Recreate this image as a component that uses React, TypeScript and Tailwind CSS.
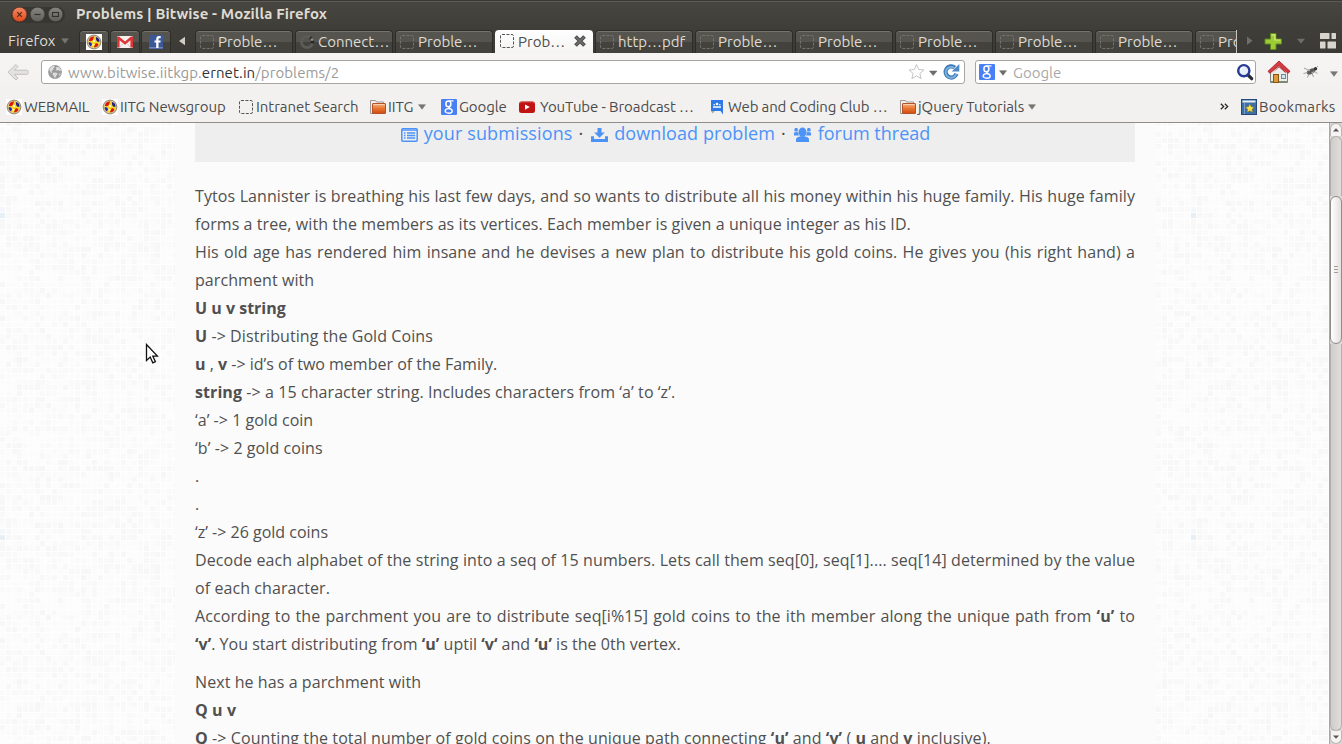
import React from "react";

const UI = "font-['Ubuntu','Open_Sans',sans-serif]";

/* ---------- small icons ---------- */

function Dashed({ dark }: { dark?: boolean }) {
  return (
    <svg className="size-4 shrink-0" viewBox="0 0 16 16">
      <rect x="1.500" y="1.500" width="13" height="13" rx="1.500" fill="none" stroke={dark ? "#555" : "#74736e"} strokeWidth="1" strokeDasharray="3 1.400" />
    </svg>
  );
}

function Emblem() {
  return (
    <svg className="size-4 shrink-0" viewBox="0 0 16 16">
      <rect width="16" height="16" fill="#fff" />
      <circle cx="8" cy="8" r="6.900" fill="#d9c79a" stroke="#8f8670" strokeWidth="1" />
      <circle cx="8" cy="8" r="5.500" fill="#f6d822" />
      <path d="M2.800 6.500a5.400 5.400 0 0 1 6-4c-2 .8-.8 3.300-2.800 4.300-1.300.6-2.700.5-3.200-.3z" fill="#e01414" />
      <path d="M10 3c2.500.5 3.700 2.500 3.500 4.500-1.400.7-2.500.3-3-.9-.4-1.200-.9-2.200-.5-3.600z" fill="#1d1d8c" />
      <path d="M2.600 8.500c1.500-.8 3.300 0 3.400 1.800L5 12.600C3.500 11.700 2.600 10 2.600 8.500z" fill="#2323b4" />
      <path d="M9.500 9.500c1.500-.6 3.200.2 2.700 1.700-.8 1.500-2.800 2.400-4.300 2z" fill="#d81414" />
      <circle cx="8" cy="7" r="1" fill="#fff" />
      <circle cx="7.300" cy="10.800" r=".9" fill="#fff" />
    </svg>
  );
}

function Tri({ cls }: { cls: string }) {
  return (
    <svg className={`shrink-0 ${cls}`} width="8" height="6" viewBox="0 0 8 6">
      <path d="M.6.7h6.800L4 5.300z" fill="currentColor" stroke="currentColor" strokeWidth=".6" />
    </svg>
  );
}

function Folder() {
  return (
    <svg className="size-4 shrink-0" viewBox="0 0 16 16">
      <defs>
        <linearGradient id="fold" x1="0" y1="0" x2="0" y2="1">
          <stop offset="0" stopColor="#f7b384" />
          <stop offset=".5" stopColor="#e8762f" />
          <stop offset="1" stopColor="#cf4a13" />
        </linearGradient>
      </defs>
      <path d="M.5 14.500v-13h5l1 1.500h7v11.500z" fill="#f1efed" stroke="#9d9995" />
      <rect x="2.500" y="4.500" width="13" height="10" rx=".5" fill="url(#fold)" stroke="#b5522a" />
      <path d="M3.500 5.500h11" stroke="#fbd0b0" />
    </svg>
  );
}

function GLogo() {
  return (
    <svg className="size-4 shrink-0" viewBox="0 0 16 16">
      <rect width="16" height="16" rx="1" fill="#4a80f5" />
      <g fill="none" stroke="#fff">
        <ellipse cx="7.400" cy="4.900" rx="2.500" ry="2.800" strokeWidth="1.500" />
        <path d="M7.500 1.900h5" strokeWidth="1.200" />
        <path d="M9 7.300c-2.200.9-1.200 1.600.6 2.500" strokeWidth="1.500" />
        <ellipse cx="7.700" cy="11.900" rx="3.500" ry="2.300" strokeWidth="1.400" />
      </g>
    </svg>
  );
}

function YouTube() {
  return (
    <svg className="size-4 shrink-0" viewBox="0 0 16 16">
      <rect x="0" y="2.500" width="16" height="11.500" rx="2.500" fill="#c01414" />
      <path d="M1 4.500q0-1.500 2-1.500h10q2 0 2 1.500" fill="none" stroke="#d95a55" strokeWidth=".7" />
      <path d="M6 5.500v5.200l4.800-2.600z" fill="#fff" />
    </svg>
  );
}

function Groups() {
  return (
    <svg className="size-4 shrink-0" viewBox="0 0 16 16">
      <path d="M2 1h12v14.500L11.500 12H2z" fill="#2f78e8" />
      <path d="M2 12h4l-2.500 2.500z" fill="#a9a9a9" />
      <circle cx="8" cy="5" r="1.300" fill="#fff" />
      <circle cx="5.200" cy="5.800" r=".8" fill="#fff" />
      <circle cx="10.800" cy="5.800" r=".8" fill="#fff" />
      <path d="M4 8.800V7.300h8v1.500z" fill="#fff" />
    </svg>
  );
}

function BookmarksIcon() {
  return (
    <svg className="size-4 shrink-0" viewBox="0 0 16 16">
      <rect x=".5" y=".5" width="15" height="15" fill="#3d6ea5" stroke="#25497a" />
      <path d="M1.500 3.500V1.500h13v2z" fill="#e9eef4" />
      <path d="M3.500 4v11" stroke="#7ba0cb" />
      <path d="M8.800 5l1.400 2.700 2.900.5-2.100 2 .5 3-2.700-1.400-2.600 1.400.5-3-2.100-2 2.900-.5z" fill="#f9e24b" stroke="#9a8212" strokeWidth=".6" />
    </svg>
  );
}

function Globe() {
  return (
    <svg className="size-4 shrink-0" viewBox="0 0 16 16">
      <circle cx="8" cy="8" r="6.900" fill="#9b9b9b" />
      <path d="M2.200 5.500C3.200 3 5.300 1.800 7.200 1.700l.6 1.600-1.600.9.300 1.500L4.400 7l.9 1.300-1.100 1z" fill="#dcdcdc" />
      <path d="M9.500 3l2.800.3 2 2.900-1.600.8-1.500-.9-1.500.7-.8-1.600zM6.500 8.500l3 .2 1.300 1.400-1.800 2-.8 2.300-1.200-1.900-1.600-2.200zM12 9.500l2 .2-1.600 2.300z" fill="#dcdcdc" />
    </svg>
  );
}

/* ---------- title bar ---------- */

function WindowButtons() {
  return (
    <svg width="54" height="18" viewBox="0 0 54 18" className="shrink-0">
      <defs>
        <linearGradient id="cl" x1="0" y1="0" x2="0" y2="1">
          <stop offset="0" stopColor="#f58a65" />
          <stop offset="1" stopColor="#dd4a1c" />
        </linearGradient>
        <linearGradient id="mn" x1="0" y1="0" x2="0" y2="1">
          <stop offset="0" stopColor="#878680" />
          <stop offset="1" stopColor="#5f5e59" />
        </linearGradient>
      </defs>
      <rect x="0" y="1" width="54" height="16" rx="8" fill="#373631" />
      <circle cx="8.500" cy="8.500" r="7.300" fill="url(#cl)" stroke="#55291b" strokeWidth=".6" />
      <path d="M6.200 6.200l4.600 4.600M10.800 6.200l-4.600 4.600" stroke="#55240f" strokeWidth="1.100" />
      <circle cx="26.500" cy="8.500" r="7.300" fill="url(#mn)" stroke="#32312d" strokeWidth=".6" />
      <path d="M23.500 8.500h6" stroke="#33322e" strokeWidth="1.200" />
      <circle cx="44.500" cy="8.500" r="7.300" fill="url(#mn)" stroke="#32312d" strokeWidth=".6" />
      <rect x="41.500" y="6.500" width="6" height="4" fill="none" stroke="#33322e" strokeWidth="1.100" />
    </svg>
  );
}

function TitleBar() {
  return (
    <div className="flex h-7 items-center border-t border-[#3a3934] bg-gradient-to-b from-[#474640] to-[#3f3e39] pl-[11px] shadow-[inset_0_1px_0_#5d5c56]">
      <WindowButtons />
      <span className="mb-[2px] ml-[11px] whitespace-nowrap text-[15px] font-bold leading-[20px] tracking-[0.09px] text-[#dfdbd2]">Problems | Bitwise - Mozilla Firefox</span>
    </div>
  );
}

/* ---------- tabs ---------- */

const TAB = "flex h-[23px] shrink-0 items-center overflow-hidden rounded-t-[4px] border border-b-0 border-[#2d2c28] bg-gradient-to-b from-[#55544f] from-50% to-[#43423d] to-50% shadow-[inset_0_1px_0_#75746e]";

function AppTab({ children, cls }: { children: React.ReactNode; cls: string }) {
  return <div className={`${TAB} justify-center pb-px ${cls}`}>{children}</div>;
}

function Tab({ label, loading }: { label: string; loading?: boolean }) {
  return (
    <div className={`${TAB} mr-[2px] w-[98px] pb-px pl-[3px] text-[#dfdbd2]`}>
      {loading ? (
        <svg className="size-4 shrink-0" viewBox="0 0 16 16">
          <circle cx="8" cy="8" r="5.500" fill="none" stroke="#5c5b56" strokeWidth="3" />
          <path d="M11 3.600a5.500 5.500 0 0 1 2.300 5.700" fill="none" stroke="#24231f" strokeWidth="3" />
          <circle cx="13" cy="5.500" r="1.500" fill="#898883" />
        </svg>
      ) : (
        <Dashed />
      )}
      <span className="ml-[3px] whitespace-nowrap text-[15px] leading-[21px]">{label}</span>
    </div>
  );
}

function TabStrip() {
  return (
    <div className="flex h-[25px] items-end bg-gradient-to-b from-[#3f3e39] to-[#3b3a36] text-[#dfdbd2]">
      <div className="flex h-[23px] w-[79px] items-center pb-px pl-2">
        <span className="w-[49px] text-[15px] leading-[20px]">Firefox</span>
        <Tri cls="ml-[4px] text-[#77756f]" />
      </div>
      <AppTab cls="w-[30px] mr-px"><Emblem /></AppTab>
      <AppTab cls="w-[30px] mr-px">
        <svg className="size-4" viewBox="0 0 16 16">
          <rect y="2" width="16" height="12" rx="1" fill="#f6f0ee" />
          <path d="M0 2.500v11h2.600V6.300L8 10.800l5.400-4.500v7.200H16v-11h-2L8 7.600 2 2.500z" fill="#dd3535" />
          <path d="M2.600 13.500L6 9.500M13.400 13.500L10 9.500" stroke="#d8b7b4" strokeWidth=".7" />
        </svg>
      </AppTab>
      <AppTab cls="w-[30px]">
        <svg className="size-4" viewBox="0 0 16 16">
          <rect x="1" y="1" width="14" height="14" fill="#3b5998" />
          <path d="M1 13h14v1.500H1z" fill="#6d84b4" />
          <path d="M8.200 14V8.600H6.500V6.500h1.700V5c0-1.900 1.100-2.900 2.800-2.900h1.700v2.100h-1.200c-.8 0-1 .4-1 1v1.300h2.200l-.3 2.100h-1.900V14z" fill="#fff" />
        </svg>
      </AppTab>
      <svg className="mb-[7px] ml-[7px] mr-[9px] shrink-0" width="8" height="10" viewBox="0 0 8 10">
        <path d="M7 .8v8.400L1 5z" fill="#d0cdc5" />
      </svg>
      <div className="flex h-[23px] w-[1042px] shrink-0 overflow-hidden border-r border-[#c9c7c0]">
        <Tab label="Proble…" />
        <Tab label="Connect…" loading />
        <Tab label="Proble…" />
        <div className="mr-[2px] flex h-[23px] w-[98px] shrink-0 items-center rounded-t-[4px] bg-gradient-to-b from-white to-[#f4f3f2] pb-px pl-[4px]">
          <Dashed dark />
          <span className="ml-[3px] w-[50px] whitespace-nowrap text-[15px] leading-[21px] text-[#4c4c4c]">Prob…</span>
          <svg className="ml-[5px] shrink-0" width="14" height="14" viewBox="0 0 14 14">
            <path d="M2.500 2.500l9 9M11.500 2.500l-9 9" stroke="#4c4c4a" strokeWidth="3.800" />
            <path d="M3 3l8 8M11 3l-8 8" stroke="#6f6f6c" strokeWidth="1.600" />
          </svg>
        </div>
        <Tab label="http…pdf" />
        <Tab label="Proble…" />
        <Tab label="Proble…" />
        <Tab label="Proble…" />
        <Tab label="Proble…" />
        <Tab label="Proble…" />
        <Tab label="Proble…" />
      </div>
      <svg className="ml-[9px] shrink-0" width="94" height="23" viewBox="0 0 94 23">
        <path d="M1 6.500v8.500l5.500-4.200z" fill="#6e6d67" />
        <path d="M24.500 3.500h5.500V9H35.500v5h-5.500v5.500H24.500V14h-5.500V9H24.500z" fill="#9ccb35" stroke="#5d8a18" />
        <path d="M25.500 4.800h3.400V10h5.500" fill="none" stroke="#d3ee7b" strokeWidth="1.200" />
        <path d="M51 8.800h8l-4 5z" fill="#6e6d67" />
        <g fill="#d7d4cd">
          <rect x="74" y="3" width="9.500" height="6" rx=".6" />
          <rect x="85.500" y="3" width="4.500" height="6" rx=".6" />
          <rect x="74" y="11.500" width="5.500" height="7" rx=".6" />
          <rect x="81.500" y="11.500" width="8.500" height="7" rx=".6" />
        </g>
      </svg>
    </div>
  );
}

/* ---------- navigation bar ---------- */

function NavBar() {
  return (
    <div className="flex h-[37px] items-start bg-gradient-to-b from-[#f6f5f4] to-[#f2f1f0] pt-[7px]">
      <svg className="ml-[6px] mt-[3px] shrink-0" width="24" height="19" viewBox="0 0 24 19">
        <path d="M10 1.500L2 9.200l8 7.800 2-2-3.600-3.700h11.800c1.600 0 2-.6 2-2.100s-.4-2-2-2H8.400L12 3.500z" fill="#e4e2df" stroke="#c3c0bc" strokeWidth="1" strokeLinejoin="round" />
      </svg>
      <div className="ml-[11px] flex h-6 w-[924px] shrink-0 items-center rounded-[3px] border border-[#a8a5a1] bg-white pl-[5px]">
        <Globe />
        <span className="ml-[5px] mt-px whitespace-nowrap text-[15px] leading-[22px] tracking-[0.08px] text-[#9a9a9a]">
          www.bitwise.iitkgp.<span className="text-[#333]">ernet.in</span>/problems/2
        </span>
        <svg className="ml-auto" width="56" height="20" viewBox="0 0 56 20">
          <path d="M8.500 2.500l2.200 5 5.200.5-4 3.500 1.200 5.200-4.600-2.800-4.600 2.800 1.200-5.200-4-3.500 5.200-.5z" fill="#fff" stroke="#c4c4c4" />
          <path d="M21.500 9h7.500l-3.750 4.500z" fill="#6b6b68" stroke="#6b6b68" strokeWidth=".5" />
          <path d="M48.500 11.800a5.600 5.600 0 1 1-1.700-6.200" fill="none" stroke="#3f7ab5" strokeWidth="4.200" />
          <path d="M51.300 2v7.600h-7.600z" fill="#4c88c3" />
          <path d="M48.200 12a5.400 5.400 0 1 1-2-6.100" fill="none" stroke="#7fb2e0" strokeWidth="1.800" />
        </svg>
      </div>
      <div className="ml-[10px] flex h-6 w-[281px] shrink-0 items-center rounded-[3px] border border-[#a8a5a1] bg-white pl-[3px]">
        <GLogo />
        <Tri cls="ml-[4px] mt-[2px] text-[#6b6b68]" />
        <span className="ml-[6px] mt-px text-[15px] leading-[22px] text-[#a9a9a9]">Google</span>
        <svg className="ml-auto mr-[1px]" width="18" height="18" viewBox="0 0 18 18">
          <path d="M11.500 11.500l4.200 4.200" stroke="#2a2a33" strokeWidth="3.200" strokeLinecap="round" />
          <circle cx="7.800" cy="7.700" r="5.600" fill="#e9eefb" stroke="#273a94" strokeWidth="2.400" />
          <path d="M4.600 7.200a3.500 3.500 0 0 1 3-3" stroke="#fff" strokeWidth="1.200" fill="none" />
        </svg>
      </div>
      <svg className="ml-[11px] shrink-0" width="24" height="24" viewBox="0 0 24 24">
        <path d="M3.500 11v11.500h17V11L12 4z" fill="#ececea" stroke="#83817e" />
        <path d="M3 21.500h18" stroke="#7b8d6a" strokeWidth="1" />
        <path d="M12 1L1 11.300l1.800 2L12 5.500l9.200 7.800 1.800-2z" fill="#d93a40" stroke="#a01c24" strokeWidth=".8" />
        <path d="M5.200 13.200L12 7.300l6.800 5.900v-1.400L12 6z" fill="#b5353a" />
        <rect x="6.500" y="14.500" width="5" height="8" fill="#dc9a3c" stroke="#875514" />
        <rect x="14.500" y="14.500" width="4" height="4" fill="#d3e5f4" stroke="#7b8590" />
      </svg>
      <svg className="ml-[12px] mt-[5px] shrink-0" width="16" height="14" viewBox="0 0 16 14">
        <ellipse cx="8" cy="6.500" rx="4.500" ry="2.600" transform="rotate(-28 8 6.500)" fill="#5a5a5a" />
        <circle cx="12.500" cy="3.800" r="1.700" fill="#333" />
        <path d="M6 5.500L1 3M5 7.500L.5 8.500M6 8.500L4.500 12.500M9 8l1.500 4M11 6l3.500 2.500M13 3l2-2" stroke="#888" strokeWidth=".8" />
        <path d="M7 4.500L2.500 3.500l4 3zM8 8l3-2-1 2.500z" fill="#bdbdbd" />
      </svg>
      <Tri cls="ml-[11px] mt-[11px] text-[#77756f]" />
    </div>
  );
}

/* ---------- bookmarks bar ---------- */

const BM = "flex shrink-0 items-center overflow-visible";

function BookmarksBar() {
  return (
    <div className="flex h-[33px] items-center whitespace-nowrap border-b border-[#8f8d8a] bg-[#f2f1f0] pl-[6px] pt-px text-[15px] leading-[22px] tracking-[-0.1px] text-[#4c4c4c]">
      <div className={`${BM} w-[96px]`}><Emblem /><span className="ml-[2px] tracking-[-0.1px]">WEBMAIL</span></div>
      <div className={`${BM} w-[136px]`}><Emblem /><span className="ml-[2px] tracking-[-0.08px]">IITG Newsgroup</span></div>
      <div className={`${BM} w-[132px]`}><Dashed dark /><span className="ml-[2px] tracking-[-0.03px]">Intranet Search</span></div>
      <div className={`${BM} w-[71px]`}><Folder /><span className="ml-[2px] tracking-[-0.05px]">IITG</span><Tri cls="ml-[4px] text-[#77756f]" /></div>
      <div className={`${BM} w-[78px]`}><GLogo /><span className="ml-[2px]">Google</span></div>
      <div className={`${BM} w-[190px]`}><YouTube /><span className="ml-[5px]">YouTube - Broadcast …</span></div>
      <div className={`${BM} w-[191px]`}><Groups /><span className="ml-[3px] tracking-[-0.14px]">Web and Coding Club …</span></div>
      <div className={BM}><Folder /><span className="ml-[2px] tracking-[-0.08px]">jQuery Tutorials</span><Tri cls="ml-[4px] text-[#77756f]" /></div>
      <svg className="ml-auto mr-[12px] shrink-0" width="9" height="7" viewBox="0 0 9 7">
        <path d="M.8.700l2.900 2.800L.8 6.300M4.800.700l2.900 2.800-2.900 2.800" fill="none" stroke="#222" strokeWidth="1.200" />
      </svg>
      <div className={`${BM} w-[101px]`}><BookmarksIcon /><span className="ml-[2px] tracking-[0.15px]">Bookmarks</span></div>
    </div>
  );
}

/* ---------- page ---------- */

const PITCH = 5.75;
const COLS = 69;
const ROWS = 56;

function makeCells() {
  const cells: { x: number; y: number; o: number }[] = [];
  let seed = 7723;
  for (let r = 0; r < ROWS; r++) {
    for (let c = 0; c < COLS; c++) {
      seed = (seed * 16807) % 2147483647;
      const v = seed / 2147483647;
      cells.push({ x: Math.round(c * PITCH), y: Math.round(r * PITCH), o: 0.006 + v * v * 0.024 });
    }
  }
  return cells;
}
const CELLS = makeCells();

function Texture() {
  return (
    <svg className="absolute inset-0 h-full w-full" shapeRendering="crispEdges">
      <defs>
        <pattern id="grid" width="397" height="322" patternUnits="userSpaceOnUse" x="0" y="84">
          {CELLS.map((k, i) => (
            <rect key={i} x={k.x} y={k.y} width="5" height="5" fill="#000" fillOpacity={k.o} />
          ))}
          <rect x="0" y="0" width="5" height="5" fill="#f3f7fb" />
          <rect x="0" y="6" width="5" height="5" fill="#e6eef6" />
        </pattern>
      </defs>
      <rect width="100%" height="100%" fill="#fefefe" />
      <rect width="100%" height="100%" fill="url(#grid)" />
    </svg>
  );
}

function Scrollbar() {
  return (
    <div className="relative flex w-[13px] shrink-0 flex-col border-l border-[#aaa7a4] bg-[#d9d6d4]">
      <div className="flex h-[13px] items-center justify-center rounded-t-full border border-b-0 border-[#b9b6b3] bg-[#f5f4f3]">
        <svg width="6" height="4" viewBox="0 0 6 4"><path d="M0 3.500h6L3 .3z" fill="#555" /></svg>
      </div>
      <div className="h-[60px] rounded-t-[6px] border border-b-0 border-[#b3b0ad] bg-gradient-to-r from-[#cfccca] to-[#e0dedc]" />
      <div className="flex h-[148px] flex-col items-center justify-center gap-[2px] rounded-[6px] border border-[#8f8c89] bg-gradient-to-r from-white to-[#e3e1df] pb-[2px]">
        <i className="h-px w-[4px] bg-[#a09d9a]" />
        <i className="h-px w-[4px] bg-[#a09d9a]" />
        <i className="h-px w-[4px] bg-[#a09d9a]" />
      </div>
      <div className="grow rounded-b-[6px] border border-t-0 border-[#b3b0ad] bg-gradient-to-r from-[#cfccca] to-[#e0dedc]" />
      <div className="flex h-[13px] items-center justify-center rounded-b-full border border-t-0 border-[#b9b6b3] bg-[#f5f4f3]">
        <svg width="6" height="4" viewBox="0 0 6 4"><path d="M0 .5h6L3 3.700z" fill="#555" /></svg>
      </div>
    </div>
  );
}

function Links() {
  return (
    <div className="flex h-[39px] items-start justify-center whitespace-nowrap bg-[#eee] pl-px text-[18px] leading-[20px] text-[#4c93f8]">
      <svg className="mr-[6px] mt-[5px]" width="17" height="14" viewBox="0 0 17 14">
        <rect x=".8" y=".8" width="15.400" height="12.400" rx="1" fill="none" stroke="currentColor" strokeWidth="1.500" />
        <path d="M1 2.200h15M3 5h1.500M3 7.500h1.500M3 10h1.500M6 5h8.200M6 7.500h8.200M6 10h8.200" stroke="currentColor" strokeWidth="1.300" />
      </svg>
      <span className="tracking-[0.12px]">your submissions</span>
      <span className="ml-[6px] mr-[8px] text-[#444]">·</span>
      <svg className="mr-[6px] mt-[5px]" width="17" height="14" viewBox="0 0 17 14">
        <path d="M6.500 0h4v4.500h3.300L8.500 9.800 3.200 4.500h3.300zM0 8.300h3V11h11V8.300h3V14H0z" fill="currentColor" />
      </svg>
      <span className="tracking-[0.08px]">download problem</span>
      <span className="ml-[6px] mr-[8px] text-[#444]">·</span>
      <svg className="mr-[7px] mt-[4px]" width="17" height="15" viewBox="0 0 17 15">
        <g fill="currentColor">
          <ellipse cx="8.500" cy="5.200" rx="4" ry="4.700" />
          <path d="M2 15v-2.500c0-2 2.600-2.700 4.500-3.200h4c1.900.5 4.500 1.200 4.500 3.200V15z" />
          <rect x=".5" y="1" width="3.300" height="3.600" rx="1.200" />
          <rect x="13.200" y="1" width="3.300" height="3.600" rx="1.200" />
          <path d="M0 8.500V5.600l3.800-.6 1.200 3.500zM17 8.500V5.600l-3.800-.6-1.200 3.500z" />
        </g>
      </svg>
      <span>forum thread</span>
    </div>
  );
}

const FULL = "whitespace-nowrap text-justify [text-align-last:justify]";

function Article() {
  return (
    <div className="whitespace-nowrap text-[16px] leading-[28px] tracking-[0.08px] text-[#505050]">
      <div className="mt-[20px]">
        <p className={FULL}>Tytos Lannister is breathing his last few days, and so wants to distribute all his money within his huge family. His huge family</p>
        <p>forms a tree, with the members as its vertices. Each member is given a unique integer as his ID.</p>
        <p className={FULL}>His old age has rendered him insane and he devises a new plan to distribute his gold coins. He gives you (his right hand) a</p>
        <p>parchment with</p>
      </div>
      <p className="tracking-normal"><b>U u v string</b></p>
      <p><b>U</b> -&gt; Distributing the Gold Coins</p>
      <p className="tracking-normal"><b>u</b> , <b>v</b> -&gt; id’s of two member of the Family.</p>
      <p><b>string</b> -&gt; a 15 character string. Includes characters from ‘a’ to ‘z’.</p>
      <p className="tracking-[0.03px]">‘a’ -&gt; 1 gold coin</p>
      <p>‘b’ -&gt; 2 gold coins</p>
      <p>.</p>
      <p>.</p>
      <p className="tracking-normal">‘z’ -&gt; 26 gold coins</p>
      <p className={FULL}>Decode each alphabet of the string into a seq of 15 numbers. Lets call them seq[0], seq[1].... seq[14] determined by the value</p>
      <p>of each character.</p>
      <p className={FULL}>According to the parchment you are to distribute seq[i%15] gold coins to the ith member along the unique path from <b>‘u’</b> to</p>
      <p className="tracking-[0.03px]"><b>‘v’</b>. You start distributing from <b>‘u’</b> uptil <b>‘v‘</b> and <b>‘u’</b> is the 0th vertex.</p>
      <p className="mt-[10px]">Next he has a parchment with</p>
      <p><b>Q u v</b></p>
      <p className="tracking-[0.09px]"><b>Q</b> -&gt; Counting the total number of gold coins on the unique path connecting <b>‘u’</b> and <b>‘v’</b> ( <b>u</b> and <b>v</b> inclusive).</p>
    </div>
  );
}

export default function App() {
  return (
    <div className="flex h-[744px] w-[1342px] flex-col overflow-hidden">
      <div className={`shrink-0 ${UI}`}>
        <TitleBar />
        <TabStrip />
        <NavBar />
        <BookmarksBar />
      </div>
      <div className="flex min-h-0 grow">
        <div className="relative grow overflow-hidden">
          <Texture />
          <main className="relative ml-[175px] h-full w-[981px] bg-[#fbfbfb] px-[20px] font-['Open_Sans',sans-serif]">
            <div className="w-[940px]">
              <Links />
              <Article />
            </div>
          </main>
          <svg className="absolute left-[145px] top-[220px]" width="14" height="22" viewBox="0 0 14 22">
            <path d="M1.500 1.500v16l3.700-3.400 2.600 5.700 2.600-1.200-2.600-5.500h4.600z" fill="#fff" stroke="#111" strokeWidth="1.300" />
          </svg>
        </div>
        <Scrollbar />
      </div>
    </div>
  );
}
